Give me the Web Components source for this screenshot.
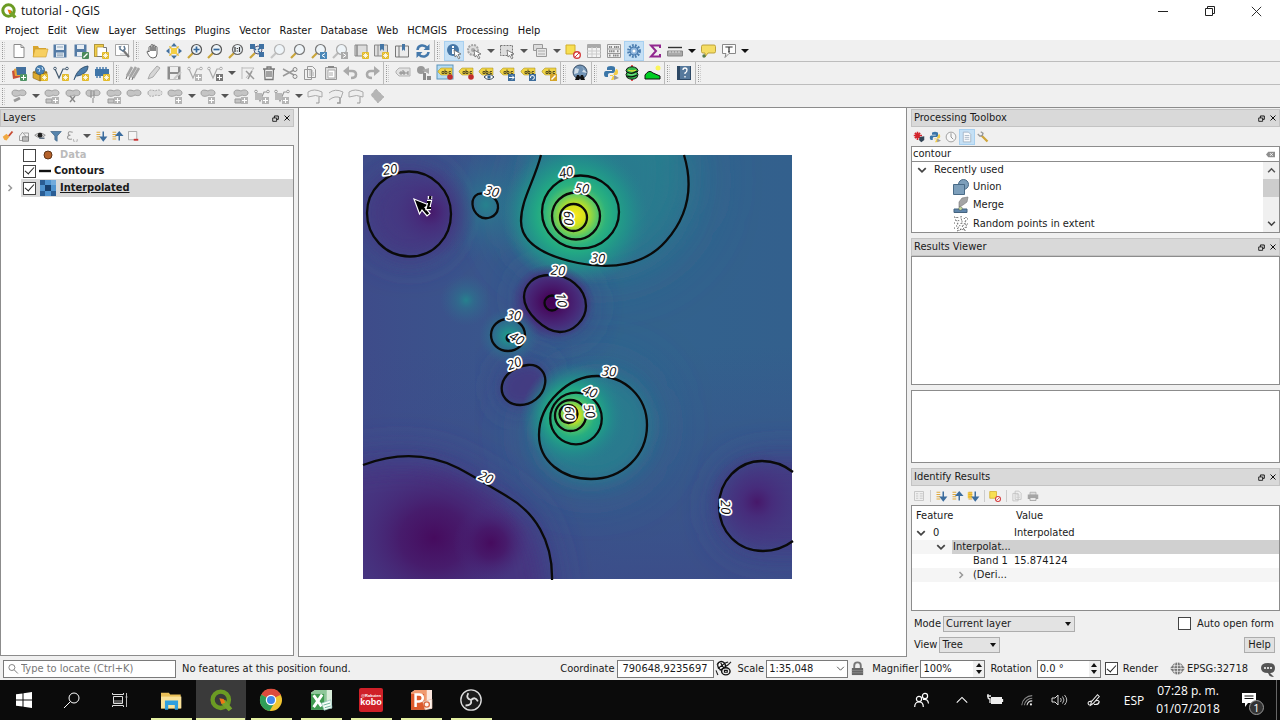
<!DOCTYPE html>
<html lang="en">
<head>
<meta charset="utf-8">
<title>tutorial - QGIS</title>
<style>
html,body{margin:0;height:100%}
body{font:11px/14px "DejaVu Sans Condensed","Noto Sans",sans-serif;color:#1a1a1a;background:#f0f0f0}
</style>
</head>
<body>
<qgis-app></qgis-app>
<script>
const define = (name, css, html, setup) => customElements.define(name, class extends HTMLElement {
  constructor() {
    super();
    const root = this.attachShadow({mode: 'open'});
    const t = document.createElement('template');
    t.innerHTML = `<style>*{box-sizing:border-box}button,input,select{font:inherit;color:inherit;margin:0}${css}</style>${typeof html === 'function' ? html(this) : html}`;
    root.append(t.content.cloneNode(true));
    if (setup) setup(root, this);
  }
});

/* ---------- icon library, 16x16 grid ---------- */
const badge = (c = '#e3bb2a') => `<rect x="9" y="9" width="7" height="7" rx="1" fill="${c}"/><path d="M12.500 10v5M10 12.500h5M10.700 10.700l3.600 3.600M14.300 10.700l-3.600 3.600" stroke="#fff" stroke-width=".8"/>`;
const tag = (c, extra = '') => `<path d="M1 6l3-3h11v7H4L1 7z" fill="${c}" stroke="#a08a20" stroke-width=".5"/><path d="M5 6.500h2v2H5zM8 4.500v4h2v-2H8M14 6.500h-2v2h2" fill="none" stroke="#4a4420" stroke-width=".9"/>${extra}`;
const lens = (c, handle, inner = '') => `<path d="M6 10l-5 5" stroke="${handle}" stroke-width="2.200"/><circle cx="9.500" cy="6.500" r="5" fill="#eef4f8" stroke="${c}" stroke-width="1.200"/>${inner}`;
const blob = '<path d="M1 5c0-4 5-3 7-2 3-2 7-1 7 2s-4 3-6 2c-3 2-8 2-8-2z" fill="#c4c4c4" stroke="#9a9a9a" stroke-width=".9"/>';
const gbadge = '<rect x="8" y="9" width="7" height="7" fill="#b5b5b5"/><path d="M11.500 10v5M9 12.500h5" stroke="#fff"/>';
const vline = c => `<path d="M2 4l4 9 4-9h3" fill="none" stroke="${c}" stroke-width="1.200"/><circle cx="2" cy="3.500" r="1.300" fill="#fff" stroke="${c}"/><circle cx="14" cy="3.500" r="1.300" fill="#fff" stroke="${c}"/>`;
const arrowTree = up => `<path d="M2 3h5M2 6h5M2 9h5M2 12h5" stroke="#e0a93b" stroke-width="1.500"/><path d="M11 ${up ? '14V6M7.500 7L11 3l3.500 4z' : '2v8M7.500 9.500L11 14l3.500-4.500z'}" stroke="#3d6d9e" stroke-width="2" fill="#3d6d9e"/>`;
const cursor = '<path d="M8 7l7 4-3 .6 2 3.400-1.500.8-1.700-3.300L9 14z" fill="#fff" stroke="#666" stroke-width=".8"/>';
const I = {
 qgis:'<circle cx="7.500" cy="7.500" r="5.700" fill="none" stroke="#6b9b23" stroke-width="3"/><path d="M8 8l2.500-.5L15.500 13.500 13 15.500 8 10.500z" fill="#74a32b"/><path d="M6.500 6.500l3 .5 1 2.500-2.500 1z" fill="#ee7913"/>',
 file:'<path d="M3 1.500h7l3 3v10H3z" fill="#fff" stroke="#8a8a8a"/><path d="M10 1.500v3h3" fill="none" stroke="#8a8a8a"/>',
 open:'<path d="M1 14V3h5l1 2h7v9z" fill="#d9a52e"/><path d="M1 14l2-8h13l-2 8z" fill="#f7cf60" stroke="#c99b30" stroke-width=".6"/>',
 save:'<path d="M1.500 1.500h13v13h-13z" fill="#547ba5"/><path d="M4 2h8v5H4z" fill="#e8eef4"/><path d="M4 9.500h8V14H4z" fill="#dde6ee"/><path d="M5 11h6M5 12.800h6M5 4h6" stroke="#7a92aa" stroke-width=".8"/>',
 saveas:'<path d="M1.500 1.500h12v12h-12z" fill="#547ba5"/><path d="M4 2h7v4H4zM4 9h7v4H4z" fill="#e8eef4"/><rect x="9" y="9" width="7" height="7" rx="1" fill="#4b8a5a"/><path d="M10.500 14.500l4-4" stroke="#fff" stroke-width="1.300"/>',
 layout:'<path d="M1.500 1.500h9v3h3v9h-12z" fill="#fff" stroke="#777"/><path d="M1.500 1.500h9v2.500H4v9.500H1.500z" fill="#f1ce4b" stroke="#b0902c" stroke-width=".7"/>'+badge(),
 layouts:'<path d="M1.500 1.500h13v11h-13z" fill="#fff" stroke="#a5a5a5"/><path d="M4 4l4-1M6 11h6" stroke="#ccc"/><path d="M9 7l6 7" stroke="#777" stroke-width="2.200"/><path d="M6 3v3l3 2 2-2-1-3" fill="none" stroke="#5f7890" stroke-width="1.500"/>',
 hand:'<path d="M4 9V4.500q0-1 1-1t1 1V8 2.500q0-1 1-1t1 1V8 3q0-1 1-1t1 1v5-3.500q0-1 1-1t1 1V11q0 4-4 4-3 0-4.500-3L2 9q0-1.500 2-.5z" fill="#fff" stroke="#555" stroke-width=".9"/>',
 panto:'<path d="M5 5h6v6H5z" fill="#f3cf45"/><path d="M8 0l3 3.500H5zM8 16l3-3.500H5zM0 8l3.500-3v6zM16 8l-3.500-3v6z" fill="#44719e"/><path d="M3 3l3 1-2 2zM13 3l-3 1 2 2zM3 13l1-3 2 2zM13 13l-3-1 2-2z" fill="#e5b92e"/>',
 zin:lens('#555','#c9a43a','<path d="M9.500 3.500v6M6.500 6.500h6" stroke="#34679b" stroke-width="1.700"/>'),
 zout:lens('#555','#c9a43a','<path d="M6.500 6.500h6" stroke="#34679b" stroke-width="1.700"/>'),
 znat:lens('#666','#c9a43a','<path d="M7 9V4M11.500 9V4M9.300 5v1M9.300 7.500v1" stroke="#333" stroke-width="1.200"/>'),
 zfull:'<path d="M6 10l-5 5" stroke="#c9a43a" stroke-width="2.200"/><circle cx="9" cy="7" r="4" fill="#dde8f0" stroke="#557"/><path d="M1 1h5v5H1zM10 1h5v5h-5zM10 9h5v5h-5z" fill="#3f71a3"/><path d="M5 5l2 2M11 5L9 7M11 9.500L9 8" stroke="#34679b" stroke-width="1.400"/>',
 zsel:lens('#b4b4b4','#c4c4c4'), zlay:lens('#777','#c9a43a'),
 zlast:lens('#777','#c9a43a','<path d="M9 9h7v7H9z" fill="#4b88b8"/><path d="M14 10.500l-3 2 3 2" fill="none" stroke="#fff"/>'),
 znext:lens('#a9a9a9','#bdbdbd','<path d="M9 9h7v7H9z" fill="#aaa"/><path d="M11 10.500l3 2-3 2" fill="none" stroke="#fff"/>'),
 newmap:'<path d="M2 2h2v11H2zM4 2h10v11H4z" fill="#ddd" stroke="#888"/>'+badge(),
 bmnew:'<path d="M1.500 2h13v11h-13zM5 2v11" fill="#ddd" stroke="#888"/><path d="M7 1h4v7L9 6 7 8z" fill="#4576a5"/>'+badge(),
 bm:'<path d="M1.500 3h13v11h-13zM5 3v11" fill="#ececec" stroke="#777"/><path d="M8 1h3v7L9.500 6.500 8 8z" fill="#4576a5"/>',
 refresh:'<path d="M2.500 7C3 2 9 1 12 4.500M13.500 9c-.5 5-6.500 6-9.500 2.500" fill="none" stroke="#4478ab" stroke-width="2.500"/><path d="M14.500 1v6h-6zM1.500 15V9h6z" fill="#4478ab"/>',
 identify:'<circle cx="7" cy="7" r="6" fill="#4577a8"/><path d="M7 3v2M7 6v5" stroke="#fff" stroke-width="2"/>'+cursor,
 action:'<circle cx="7" cy="7" r="5" fill="#ddd" stroke="#a5a5a5" stroke-width="2" stroke-dasharray="2 1"/><circle cx="7" cy="7" r="2" fill="#aaa"/>'+cursor,
 select:'<path d="M1.500 2.500h12v10h-12z" fill="#ddd" stroke="#777" stroke-dasharray="2 1"/>'+cursor,
 form:'<path d="M1.500 1.500h9v6h-9z" fill="#ddd" stroke="#999"/><path d="M4.500 5.500h10v8h-10z" fill="#e6e6e6" stroke="#999"/><path d="M6 8h7M6 11h7" stroke="#aaa"/>',
 desel:'<path d="M1 2h9v9H1z" fill="#f7df52" stroke="#d1ae2b"/><circle cx="12" cy="12" r="3.300" fill="#fff" stroke="#d33b3b" stroke-width="1.400"/><path d="M10 14l4-4" stroke="#d33b3b"/>',
 table:'<path d="M1.500 1.500h13v13h-13z" fill="#f4f4f4" stroke="#aaa"/><path d="M1 2h14v3H1z" fill="#aaa"/><path d="M6 4v10M10.500 4v10M1 8h14M1 11h14" stroke="#ccc"/>',
 abacus:'<path d="M1.500 1.500h13v13h-13zM1 6h14M1 10.500h14" fill="none" stroke="#999"/><path d="M3 4h3M8 4h5M3 8.300h6M11 8.300h2M3 12.500h2M7 12.500h6" stroke="#888" stroke-width="2" stroke-dasharray="1.300 .5"/>',
 gear:'<circle cx="8" cy="8" r="5.300" fill="none" stroke="#4b7db0" stroke-width="3.200" stroke-dasharray="1.700 1.100"/><circle cx="8" cy="8" r="4" fill="#8fb6dd" stroke="#4b7db0"/><circle cx="8" cy="8" r="1.500" fill="#fff"/>',
 sigma:'<path d="M13 5V2.500H4L9 8l-5 5.500h9V11" fill="none" stroke="#91278f" stroke-width="2"/>',
 ruler:'<path d="M1 4.500h14" stroke="#333" stroke-width="1.400"/><path d="M.5 8h15v5H.5z" fill="#aaa" stroke="#888"/><path d="M3 8v2M6 8v2M9 8v2M12 8v2" stroke="#ddd"/>',
 tip:'<path d="M3 2h11q1.500 0 1.500 1.500v5Q15.500 10 14 10H8l-3 4V10H3Q1.500 10 1.500 8.500v-5Q1.500 2 3 2z" fill="#f5dd65" stroke="#b79b30" stroke-width=".9"/><circle cx="4" cy="13" r="1.700" fill="#52794f"/>',
 textann:'<path d="M1.500 1.500h13v9H8l-4 4 1-4H1.500z" fill="#fbfbfb" stroke="#888"/><path d="M5 4.500V4h6v.5M8 4v5M7 9h2" fill="none" stroke="#333" stroke-width="1.200"/>',
 dsm:'<path d="M1 6l8-3 1 9-8 2z" fill="#c94f37"/><path d="M3 4l8-2v9H4z" fill="#e7a23b"/><path d="M5 2h10v8H6z" fill="#43719f"/><rect x="9" y="9" width="7" height="7" rx="1" fill="#4f9465"/><path d="M12.500 10v5M10 12.500h5" stroke="#fff"/>',
 box:'<path d="M1 7l7-3 7 3v6l-7 3-7-3z" fill="#dba92e" stroke="#8a6820" stroke-width=".6"/><path d="M1 7l7 3 7-3M8 10v6" stroke="#8a6820" fill="none"/><circle cx="8" cy="5" r="4.500" fill="#4a82b5" stroke="#325b80" stroke-width=".7"/><path d="M5 3l3 1-1 3M10 2l1 3" stroke="#cfe2f1" fill="none"/>'+badge(),
 shp:vline('#43596e')+badge(), spat:'<path d="M1 15C3 8 7 2 15 1c0 6-5 9-11 10" fill="#4d7eaa" stroke="#34526f"/>'+badge(),
 mem:'<path d="M1 4h14v7H1z" fill="#3f75a8"/><path d="M3 2v2M6 2v2M9 2v2M12 2v2M3 11v2M6 11v2" stroke="#3f75a8" stroke-width="1.400"/>'+badge(),
 edits:'<path d="M2 11L7 2M5 12l6-10M8 13l6-10" stroke="#a5a5a5" stroke-width="2.600"/><path d="M1 14l1-3M4 15l1-3M7 15l1-3" stroke="#777"/>',
 pencil:'<path d="M2 14l2-5 7-8 3 2-7 9z" fill="#d6d6d6" stroke="#aaa"/>',
 gsave:'<path d="M1.500 1.500h13v13h-13z" fill="#8d8d8d"/><path d="M4 2h8v5H4zM4 9h8v5H4z" fill="#eee"/><path d="M8 14l7-7" stroke="#c8c8c8" stroke-width="2"/>',
 addf:vline('#aaa')+gbadge, addf2:vline('#aaa')+'<path d="M9 9h7v7H9z" fill="#777"/><path d="M12.500 10v5M10 12.500h5" stroke="#fff"/>',
 node:'<path d="M2 2v12M2 3h12L6 13" stroke="#bbb" fill="none"/><path d="M6 6l8 8M12 6l-4 8" stroke="#999" stroke-width="1.500"/>',
 trash:'<path d="M2 4h12M6 4V2h4v2M3.500 4l.5 10.500h8l.5-10.500M6 6v6M8 6v6M10 6v6" fill="none" stroke="#777" stroke-width="1.300"/>',
 cut:'<path d="M1 4l11 6M1 11l11-6" stroke="#999" stroke-width="1.500"/><circle cx="13" cy="11.500" r="2" fill="none" stroke="#888"/><circle cx="13" cy="4.500" r="2" fill="none" stroke="#888"/>',
 copy:'<path d="M2.500 4.500h7v10h-7zM5.500 1.500h5l3 3v8h-8z" fill="#f1f1f1" stroke="#999"/><path d="M7 6h4M7 8h5M7 10h5" stroke="#aaa"/>',
 paste:'<path d="M2.500 2.500h11v12h-11z" fill="#ddd" stroke="#999"/><path d="M5 5h7v8H5z" fill="#fff" stroke="#aaa"/><path d="M5 1h6v2H5z" fill="#888"/><path d="M6 8h4M6 10h4" stroke="#aaa"/>',
 undo:'<path d="M2 6h7q4 0 4 3.500T8 13" fill="none" stroke="#aaa" stroke-width="2.600"/><path d="M6 1v10L0 6z" fill="#aaa"/>',
 redo:'<path d="M14 6H7q-4 0-4 3.500T8 13" fill="none" stroke="#aaa" stroke-width="2.600"/><path d="M10 1v10l6-5z" fill="#aaa"/>',
 lab0:'<path d="M1 6l3-3h11v8H4L1 8z" fill="#e2e2e2" stroke="#b2b2b2"/><path d="M5 7h2v2H5zM8 5v4h2V7H8M14 7h-2v2h2" fill="none" stroke="#8a8a8a"/>',
 diag:'<circle cx="5" cy="5" r="4" fill="#999"/><path d="M6 5l7-2v6z" fill="#aaa"/><path d="M7 8h3v7H7zM11 11h4v4h-4z" fill="#8a8a8a"/>',
 lab1:'<rect width="16" height="14" fill="#b6dcf3" stroke="#5c94ba"/>'+tag('#f0d445','<circle cx="13" cy="12" r="2.800" fill="#c22d2d"/>'),
 lab2:tag('#f0d445','<circle cx="13" cy="12" r="2.800" fill="#c22d2d"/>'),
 lab3:tag('#f0d445','<path d="M6 12q5-5 10 0-5 5-10 0z" fill="#fff" stroke="#345"/><circle cx="11" cy="12" r="1.700" fill="#369"/>'),
 lab4:tag('#f0d445','<path d="M9 9h7v7H9z" fill="#3f6e9d"/><path d="M10 12.500h5M13 10.500l2 2-2 2" stroke="#fff" fill="none"/>'),
 lab5:tag('#f0d445','<path d="M9 9h7v7H9z" fill="#3f6e9d"/><path d="M10.500 13a2 2 0 1 1 2 1.500" stroke="#fff" fill="none"/>'),
 lab6:tag('#f0d445','<path d="M9 9h7v7H9z" fill="#d4a52a"/><path d="M10.500 14.500l4-4" stroke="#fff" stroke-width="1.500"/>'),
 globe:'<circle cx="8" cy="7" r="7" fill="#7193b5" stroke="#3b5068"/><path d="M3 3l4 1-1 4-4 1M9 1l3 3-2 3 5 1" fill="#cfdce8"/><path d="M3 15l2-5h2l1 2 1-2h2l2 5h-4l-1-2-1 2z" fill="#111"/>',
 py:'<path d="M8 1q-4 0-4 2v2h5v1H3Q1 6 1 9t2 3h2V9.500Q5 8 7 8h3q2 0 2-2V3q0-2-4-2z" fill="#3b76a8"/><path d="M8 15q4 0 4-2v-2H7v-1h6q2 0 2-3t-2-3" fill="#f3cd46"/><path d="M11 10l5 3-5 2z" fill="#999"/>',
 grass:'<path d="M8 0v16" stroke="#d22" stroke-width="1.500"/><path d="M3 3.500q5-3.500 10 0l1 2-1 2 1 2-1 3q-5 3.500-10 0l-1-3 1-2-1-2z" fill="#2fbd4a" stroke="#111"/><path d="M3 7q5 3 10-1M3 11q5 2 10-1" stroke="#111" stroke-width="1.200" fill="none"/><path d="M4 5q4 2 8 0" stroke="#f4dd2f" stroke-width="1.300" fill="none"/><path d="M4 9.300q4 1.500 8-.5" stroke="#7fe08c" fill="none"/>',
 hill:'<path d="M0 14V10q4-6 8-2l7 3v3z" fill="#00ce22" stroke="#111"/><circle cx="13" cy="3" r="2.500" fill="#fbf55b"/>',
 help:'<path d="M1 1h14v14H1z" fill="#2d4966"/><path d="M4 1h10v13H4z" fill="#56799c"/><path d="M7 5q0-2 2-2t2 2-2 3v1M9 11v1.500" fill="none" stroke="#fff" stroke-width="1.300"/>',
 d1:blob+'<path d="M3 13l6-3" stroke="#999" stroke-width="3"/>',
 d2:blob+'<path d="M2 11h6v4H2z" fill="#c4c4c4" stroke="#999"/>'+gbadge,
 d3:blob+'<path d="M5 8l5 6M10 8l-5 6" stroke="#888" stroke-width="1.400"/>',
 d4:blob+'<path d="M6 3v7M9 3v7M8 10v5" stroke="#888"/>',
 d5:blob, d6:'<path d="M1 5c0-4 5-3 7-2 3-2 7-1 7 2s-4 3-6 2c-3 2-8 2-8-2z" fill="#ddd" stroke="#aaa" stroke-dasharray="2 1"/>',
 d7:blob+gbadge, d8:vline('#999')+gbadge+'<path d="M1 5h7v7H1z" fill="#bbb"/>',
 d9:'<path d="M1 4q6-4 14 0v5q-6-3-14 0z" fill="#eee" stroke="#aaa"/><path d="M12 9v6H9" stroke="#999" fill="none"/>',
 d10:'<path d="M1 5q6-5 14-1l-2 6q-6-3-12 2" fill="#eee" stroke="#aaa"/><path d="M12 10v5H9" stroke="#999" fill="none" stroke-width="1.500"/>',
 d11:'<path d="M7 1l8 8-6 6-7-8z" fill="#b5b5b5" stroke="#aaa" stroke-dasharray="1 1"/>',
 brush:'<path d="M1 9l5-4 4 4-4 5-3-1z" fill="#f0a943"/><path d="M9 8l5-6" stroke="#c84b32" stroke-width="2.500"/>',
 group:'<path d="M2 8l4-5 4 5v6H2zM8 4h6v10" fill="none" stroke="#888"/><path d="M6 9h8v6H6z" fill="#bbb" stroke="#777"/>',
 eye:'<path d="M1 7q7-6 14 0-7 6-14 0z" fill="#ddd" stroke="#777"/><circle cx="8" cy="7" r="3.200" fill="#222"/><path d="M7 11h7" stroke="#678" stroke-width="2"/>',
 filter:'<path d="M1 2h14l-5.500 6v7l-3-2V8z" fill="#5584ad" stroke="#41678a"/>',
 eps:'<path d="M9 3Q3 1 3 4.500 3 7 6 7 2 7 2 10t6 2" fill="none" stroke="#999" stroke-width="1.400"/><path d="M10 12v3h2M15 12v3h-2" stroke="#aaa" fill="none"/>',
 exp:arrowTree(false), col:arrowTree(true), expn:'<path d="M1 3h6v8H1z" fill="#f5cc3e"/>'+arrowTree(false),
 rem:'<path d="M2 2h11v11H2z" fill="#f5f5f5" stroke="#999"/><path d="M9 13h6" stroke="#c33" stroke-width="2.500"/>',
 cog:'<path d="M6 1v11M1 6h11M2.500 2.500l7 7M9.500 2.500l-7 7" stroke="#d3242c" stroke-width="2.200"/><path d="M9 8l6-1v5l-4 3-3-3z" fill="#345"/>',
 clock:'<circle cx="8" cy="8" r="6.500" fill="#f7f7f7" stroke="#999" stroke-width="1.200"/><path d="M8 3v5l3 3" fill="none" stroke="#888" stroke-width="1.200"/>',
 doc:'<path d="M3 1.500h7l3 3v10H3z" fill="#f8fafc" stroke="#9ab"/><path d="M5 6h6M5 8.500h6M5 11h6" stroke="#9ab"/>',
 wrench:'<path d="M6 6l8 8" stroke="#cfa53a" stroke-width="3"/><path d="M1 4l3 3 3-1 1-3-3-2" fill="none" stroke="#999" stroke-width="1.800"/>',
 union:'<circle cx="10.500" cy="5.500" r="5" fill="#7d9fbb" stroke="#496b87"/><path d="M.5 5.500h11v10H.5z" fill="#7d9fbb" stroke="#496b87"/>',
 merge:'<path d="M1 12h13v3.500H1z" fill="#5f86ab" stroke="#45637f"/><path d="M6 10V5l3-4 6-1-1 5-4 3z" fill="#a5a5a5" stroke="#777" stroke-width=".6"/><circle cx="7.500" cy="11.500" r="1.800" fill="#c5dc9a" stroke="#555" stroke-width=".5"/>',
 rnd:'<path d="M1 1l14 2M2 4l12 2M1 7l14 1M3 10l12-1M1 12l13 2M4 15l10-4M8 0l2 15M3 1l3 14M13 1l-1 14" stroke="#555" stroke-dasharray="1 2.300" stroke-width="1"/>',
 lst:'<path d="M2 2h12v12H2z" fill="none" stroke="#bbb"/><path d="M4 5h3M4 8h3M4 11h3M9 5h4M9 8h4M9 11h4" stroke="#bbb"/>',
 gcopy:'<path d="M2.500 4.500h7v10h-7zM5.500 1.500h5l3 3v8h-8z" fill="#f1f1f1" stroke="#bbb"/><path d="M7 6h4M7 8h5M7 10h5" stroke="#ccc"/>',
 print:'<path d="M4 3h8v4H4z" fill="#ddd" stroke="#aaa"/><path d="M1 6h14v6H1z" fill="#a5a5a5"/><path d="M4 10h8v4H4z" fill="#e8e8e8" stroke="#999"/>',
 ras:'<path d="M0 0h16v16H0z" fill="#2a5d94"/><path d="M0 5h5v6H0zM5 0h6v5H5zM11 5h5v6h-5zM5 11h6v5H5z" fill="#4f93cf"/><path d="M5 5h6v6H5z" fill="#173f6d"/><path d="M11 0h5v5h-5z" fill="#72aadb"/>',
 dot:'<circle cx="8" cy="8" r="4" fill="#b5622b" stroke="#5f3418"/>',
 line:'<path d="M2 8h12" stroke="#111" stroke-width="2.400"/>',
 bug:'<path d="M2 15L0 10M3 1l-2 3M13 4l3-3M10 2l3-1" stroke="#222" stroke-width="1.200"/><ellipse cx="6" cy="5" rx="4" ry="4.500" fill="#fff" stroke="#111" stroke-width="1.500" transform="rotate(-25 6 5)"/><ellipse cx="10.500" cy="11" rx="4.500" ry="3.800" fill="#eee" stroke="#111" stroke-width="1.500"/><path d="M2 8l8-6M4 10l9-6M5 2l3 5M9 10h3v2H9z" stroke="#111" stroke-width="1.200"/>',
 lock:'<path d="M4.500 8V5q0-3.500 3.500-3.500T11.500 5v3" fill="none" stroke="#777" stroke-width="2"/><path d="M2 7.500h12V15H2z" fill="#666"/><path d="M2 10h12M2 12.500h12" stroke="#888"/>',
 crs:'<path d="M4 3q4-3 8 0l4 5-4 5q-4 3-8 0L0 8z" fill="#777"/><path d="M0 8h16M3 5h10M3 11h10M8 1v14M5.500 2q-3 6 0 12M10.500 2q3 6 0 12" stroke="#eee" stroke-width=".8" fill="none"/>',
 chat:'<path d="M1 7q0-5 7-5t7 5-5 5l4 4q-5 0-6-4-7 0-7-5z" fill="#555"/><path d="M4 7h2M7 7h2M10 7h2" stroke="#fff" stroke-width="1.700"/>',
 mag:'<circle cx="6.500" cy="6" r="4" fill="none" stroke="#777" stroke-width="1.200"/><path d="M9.500 9l5 5" stroke="#777" stroke-width="1.300"/>',
 clear:'<path d="M0 8l4-5h12v10H4z" fill="#8e8e8e"/><path d="M7 5.500l5 5M12 5.500l-5 5" stroke="#fff" stroke-width="1.500"/>',
 float:'<path d="M6 3.500h7v6H6z" fill="none" stroke="#111" stroke-width="1.700"/><path d="M3 7h7v6H3z" fill="#d9d9d9" stroke="#111" stroke-width="1.500"/>',
 x:'<path d="M3 3l10 10M13 3L3 13" stroke="#111" stroke-width="2"/>',
 cr:'<path d="M5 2l6 6-6 6" fill="none" stroke="#999" stroke-width="3"/>',
 cd:'<path d="M2 5l6 6 6-6" fill="none" stroke="#444" stroke-width="2.800"/>',
 cdt:'<path d="M2 5l6 6 6-6" fill="none" stroke="#555" stroke-width="1.700"/>',
 cu:'<path d="M2 11l6-6 6 6" fill="none" stroke="#555" stroke-width="2.800"/>',
 wmin:'<path d="M3 8.500h10" stroke="#222"/>', wmax:'<path d="M3.500 5.500h7v7h-7zM5.500 5.500v-2h7v7h-2" fill="none" stroke="#222"/>', wx:'<path d="M3 3l10 10M13 3L3 13" stroke="#222"/>',
 win:'<path d="M0 2.300l6.500-.9v6.100H0zM7.500 1.200L16 0v7.500H7.500zM0 8.500h6.500v6.100L0 13.700zM7.500 8.500H16V16l-8.500-1.200z" fill="#fff"/>',
 tsearch:'<circle cx="10" cy="6" r="5" fill="none" stroke="#fff"/><path d="M6.500 9.500L0 16" stroke="#fff"/>',
 tview:'<path d="M1.500 4.500h9v7h-9zM.5 1v1.500h11V1M.5 15v-1.500h11V15" fill="none" stroke="#ddd"/><path d="M2 8h8v3H2z" fill="#555"/><path d="M14.500 1v14M13.500 5h2" stroke="#bbb"/>',
 folder:'<path d="M0 2h6l1 1.500h8V14H0z" fill="#e9bf58"/><path d="M0 5h15.500v9H0z" fill="#fae29a"/><path d="M3 8h10v7h-2.500v-3.500h-5V15H3z" fill="#2f9fdf"/>',
 chrome:'<circle cx="8" cy="8" r="8" fill="#f1c531"/><path d="M8 8L1 4a8 8 0 0 1 14 0z" fill="#dd4b3e"/><path d="M8 8L1 4a8 8 0 0 0 6 12l4-7z" fill="#2f9e57"/><path d="M8 4h7" stroke="#dd4b3e" stroke-width="1"/><circle cx="8" cy="8" r="3.800" fill="#fff"/><circle cx="8" cy="8" r="2.900" fill="#4287ec"/>',
 excel:'<path d="M0 2l3-2h13v14H0z" fill="#d9ecd9"/><path d="M0 2l3-2h9v15H0z" fill="#8fc79a"/><path d="M0 3h10v12H0z" fill="#3f9a50"/><path d="M2 4l6 8.500M8.500 3.500l-6.500 9.500" stroke="#fff" stroke-width="2.200"/><path d="M8 10l7-2.500 1 6-6 2z" fill="#f5fff5" stroke="#8bb" stroke-width=".5"/><path d="M9.500 11.500l5-1.500M10.500 13.500l4.500-1.300" stroke="#6a9" stroke-width=".7"/>',
 ppt:'<path d="M0 2l3-2h13v14H0z" fill="#fbe5dc"/><path d="M0 2l3-2h9v15H0z" fill="#f09a70"/><path d="M0 3h10v12H0z" fill="#dd5a2c"/><path d="M3.500 13V3.500h2.800q2.700 0 2.700 2.600T6.300 8.700H4" fill="none" stroke="#fff" stroke-width="1.900"/><path d="M9 9l7-2v7l-5 1z" fill="#fff5ee" stroke="#dba" stroke-width=".5"/><circle cx="12" cy="11" r="2" fill="none" stroke="#d96940"/>',
 obs:'<circle cx="8" cy="8" r="7.400" fill="#1c1c1c" stroke="#ddd" stroke-width="1"/><path d="M8 8q-4-1-2-5M8 8q3-3 5 1M8 8q1 4-4 4" fill="none" stroke="#ddd" stroke-width="1.300"/>',
 people:'<circle cx="5" cy="7" r="2.600" fill="none" stroke="#fff" stroke-width="1.200"/><path d="M.7 15q0-5 4.300-5t4.300 5M9 7.500q5-1 5.500 4" fill="none" stroke="#fff" stroke-width="1.200"/><circle cx="11" cy="4" r="2.600" fill="none" stroke="#fff" stroke-width="1.200"/>',
 tup:'<path d="M2 11l6-6 6 6" fill="none" stroke="#fff" stroke-width="1.200"/>',
 bat:'<path d="M4 5h11v7H4z" fill="#eee"/><path d="M15.500 7v3M0 4h4M1 2v3q0 2 2 2v4" stroke="#eee" fill="none" stroke-width="1.300"/>',
 wifi:'<g fill="none" stroke="#888" stroke-width="1.200"><path d="M2 14A12 12 0 0 1 14 3"/><path d="M5 14A9 9 0 0 1 14 6"/><path d="M8 14a6 6 0 0 1 6-5" stroke="#ddd"/></g><circle cx="12.500" cy="13" r="1.200" fill="#eee"/>',
 vol:'<path d="M1 6h3l3-3v10L4 10H1z" fill="none" stroke="#ddd"/><path d="M9.500 6q1.500 2 0 4M11.500 4.500q3 3.500 0 7M13.500 3q4.500 5 0 10" fill="none" stroke="#bbb"/>',
 pen:'<path d="M4 14l1-4 7-8 2 2-7 8zM6 9l-4 1q-2 2 1 4M8 13q5 1 6-3-1-2-4-1" fill="none" stroke="#eee" stroke-width="1.200"/>',
 note:'<path d="M1 1h14v10H7l-3 4v-4H1z" fill="#fff"/><path d="M3.500 4h9M3.500 6.500h9" stroke="#111"/>'
};
const ic = (n, s = 16) => `<ui-icon name="${n}" style="--s:${s}px"></ui-icon>`;
define('ui-icon', ':host{display:inline-flex;flex:none;width:var(--s,16px);height:var(--s,16px)}svg{width:100%;height:100%;overflow:visible}',
  h => `<svg viewBox="0 0 16 16" fill="none" aria-hidden="true">${I[h.getAttribute('name')]}</svg>`);

/* ---------- toolbars ---------- */
/* ">" is a drop-down arrow, ">k" a black one, "!" marks a pressed button */
define('tool-group', `
:host{display:flex;align-items:center;height:100%;flex:none}
.grip{width:3px;height:17px;margin:0 4px 0 1px;border-left:1px dotted #999;border-right:1px dotted #ccc}
.items{display:flex;justify-content:space-between;align-items:center;width:var(--w);height:100%}
button{border:0;background:none;padding:0;width:20px;height:20px;display:flex;align-items:center;justify-content:center}
button.on{background:#c5e0f5;box-shadow:inset 0 0 0 1px #a8d0f0}
button.dd{width:12px}
.dd i{border:4px solid transparent;border-top:4px solid #555;border-bottom:0}
.dd.k i{border-top-color:#111}
:host([line]) .items{margin-right:1px}
:host([line])::after{content:"";height:100%;border-left:1px solid #bbb;margin-right:1px}`,
h => `<span class="grip"></span>${h.hasAttribute('items') ? `<div class="items" role="group">${h.getAttribute('items').split(' ').map(n =>
  n === '>' || n === '>k' ? `<button class="dd ${n[1] || ''}" aria-label="More options"><i></i></button>`
  : `<button class="${n[0] === '!' ? 'on' : ''}" aria-label="${n.replace('!', '')}">${ic(n.replace('!', ''))}</button>`).join('')}</div>` : ''}`);
const tg = (w, line, items) => `<tool-group ${line ? 'line' : ''} style="--w:${w}px" items="${items}"></tool-group>`;

define('tool-bars', `
:host{display:block;background:#f0f0f0;border-bottom:1px solid #8c8c8c}
.row{display:flex;align-items:center;height:21px;padding-left:1px}
.row+.row{border-top:1px solid #bdbdbd;height:23px}`,
`<div class="row" role="toolbar">${tg(123, 1, 'file open save saveas layout layouts')}${tg(290, 1, 'hand panto zin zout znat zfull zsel zlay zlast znext newmap bmnew bm refresh')}${tg(307, 0, '!identify action > select > form > desel table abacus !gear sigma ruler >k tip textann >k')}</div>
<div class="row" role="toolbar">${tg(103, 1, 'dsm box shp spat mem')}${tg(259, 1, 'edits pencil gsave addf addf2 > node trash cut copy paste undo redo')}${tg(166, 1, 'lab0 diag lab1 lab2 lab3 lab4 lab5 lab6')}${tg(20, 1, 'globe')}${tg(62, 1, 'py grass hill')}${tg(20, 1, 'help')}<tool-group></tool-group></div>
<div class="row" role="toolbar">${tg(378, 0, 'd1 > d2 d3 d4 d2 d5 d6 d7 > d7 > d2 d8 d8 > d9 d10 d9 d11')}</div>`);

/* ---------- title + menu ---------- */
define('title-bar', `
:host{display:flex;align-items:center;height:22px;background:#fff;padding-left:1px;font:12px/16px "Open Sans",sans-serif;color:#111}
span{flex:1;padding-left:4px}
button{border:0;background:none;width:47px;height:22px;padding:0;display:grid;place-items:center}`,
`${ic('qgis')}<span>tutorial - QGIS</span><button aria-label="Minimize">${ic('wmin')}</button><button aria-label="Restore">${ic('wmax')}</button><button aria-label="Close">${ic('wx', 15)}</button>`);
define('menu-bar', `
:host{display:block;background:#fff;height:18px;font-size:11px}
nav{display:flex;align-items:center;height:18px;padding-left:5px;gap:9px}
button{border:0;background:none;padding:0;line-height:18px;color:#111}`,
`<nav>${'Project Edit View Layer Settings Plugins Vector Raster Database Web HCMGIS Processing Help'.split(' ').map(m => `<button>${m}</button>`).join('')}</nav>`);

/* ---------- dock panel ---------- */
define('dock-panel', `
:host{display:flex;flex-direction:column;min-height:0}
header{display:flex;align-items:center;height:18px;flex:none;background:#d9d9d9;border:1px solid #c3c3c3;padding:0 0 0 2px}
h2{font:inherit;margin:0;flex:1}
button{border:0;background:none;padding:0;width:12px;height:16px;display:grid;place-items:center}
::slotted(*){flex:none}::slotted(.fill){flex:1 1 auto}`,
h => `<header><h2>${h.getAttribute('heading')}</h2><button aria-label="Float">${ic('float', 9)}</button><button aria-label="Close">${ic('x', 8)}</button></header><slot></slot>`);

const small = 'button.t{border:0;background:none;padding:0;width:16px;height:16px;display:grid;place-items:center}button.dd{width:13px}button.t.on{background:#c5e0f5;box-shadow:inset 0 0 0 1px #a8d0f0}.dd i{border:4px solid transparent;border-top-color:#555;border-bottom:0}.sep{width:1px;height:12px;background:#ccc;margin:0 2px 0 3px}';
const st = n => `<button class="t${n[0] === '!' ? ' on' : ''}" aria-label="${n.replace('!', '')}">${ic(n.replace('!', ''), 12)}</button>`;
const check = 'input[type=checkbox]{appearance:none;flex:none;width:13px;height:13px;border:1px solid #444;background:#fff;display:grid;place-items:center}input[type=checkbox]:checked::before{content:"";width:4px;height:8px;border:solid #222;border-width:0 1px 1px 0;transform:rotate(42deg);margin-top:-3px}';

define('layer-tree', `${small}${check}
:host{display:flex;flex-direction:column}
.bar{display:flex;align-items:center;height:18px;flex:none}
ul{flex:1;margin:0;padding:1px 0 0;list-style:none;background:#fff;border:1px solid #8c8c8c}
li{display:flex;align-items:center;height:16px;padding-left:5px}
li>ui-icon:first-child,.no{width:8px;flex:none}
label{display:flex;align-items:center;gap:3px;padding-left:9px;font-weight:bold}
.off{color:#bbb}.sel{background:linear-gradient(90deg,#fff 20px,#d9d9d9 20px);height:18px}.sel b{text-decoration:underline}
.no+label{gap:1px}.w label{gap:4px}`,
`<div class="bar">${['brush', 'group', 'eye', 'filter', 'eps'].map(st).join('')}<button class="t dd" aria-label="Expression filter"><i></i></button>${['exp', 'col', 'rem'].map(st).join('')}</div>
<ul><li class="w off"><span class="no"></span><label><input type="checkbox">${ic('dot')}<b>Data</b></label></li>
<li><span class="no"></span><label><input type="checkbox" checked>${ic('line')}<b>Contours</b></label></li>
<li class="sel w">${ic('cr', 8)}<label><input type="checkbox" checked>${ic('ras')}<b>Interpolated</b></label></li></ul>`);

define('tool-box', `${small}
:host{display:flex;flex-direction:column}
.bar{display:flex;align-items:center;height:19px}
.search{display:flex;align-items:center;height:16px;background:#fff;border:1px solid #8c8c8c;padding-right:4px}
.search input{flex:1;min-width:0;border:0;outline:0;padding:0 1px;background:none;height:14px}
.search button{border:0;background:none;padding:0;display:flex}
.tree{display:flex;height:71px;background:#fff;border:1px solid #8c8c8c;border-top:0;overflow:hidden}
ul{flex:1;margin:0;padding:0;list-style:none}
li{display:flex;align-items:center;gap:4px;height:18px;padding-left:41px}
li.top{height:15px;padding-left:5px;gap:7px}li.u{height:19px}
.sb{width:16px;background:#f0f0f0;display:flex;flex-direction:column;align-items:center}
.sb i{width:16px;height:18px;background:#cdcdcd;margin:0 0 auto}.sb ui-icon{margin:4px 0}`,
`<div class="bar">${['cog', 'py', 'clock', '!doc', 'wrench'].map(st).join('')}</div>
<div class="search"><input type="text" value="contour" aria-label="Search"><button aria-label="Clear">${ic('clear', 9)}</button></div>
<div class="tree"><ul><li class="top">${ic('cd', 10)}Recently used</li><li class="u">${ic('union')}Union</li><li>${ic('merge')}Merge</li><li class="u">${ic('rnd')}Random points in extent</li></ul>
<div class="sb">${ic('cu', 9)}<i></i>${ic('cd', 9)}</div></div>`);

define('results-view', `
:host{display:flex;flex-direction:column;gap:5px}
div{background:#fff;border:1px solid #8c8c8c;flex:128 1 0}div+div{flex-grow:71}`, '<div></div><div></div>');

define('identify-view', `${small}${check}
:host{display:flex;flex-direction:column;padding-bottom:4px}
.bar{display:flex;align-items:center;height:19px}
.grid{height:106px;background:#fff;border:1px solid #8c8c8c}
table{width:100%;border-collapse:collapse;table-layout:fixed}
th,td{font-weight:normal;text-align:left;padding:0;height:14px;line-height:14px;white-space:nowrap}
th{height:20px;padding-left:4px}th:first-child{width:100px}
td{padding-left:2px}
td:first-child{padding-left:1px}
td div{display:flex;align-items:center}
.l1{padding-left:3px;gap:7px}.l2{padding-left:23px;gap:7px}.l3{padding-left:60px}.l3c{padding-left:44px;gap:8px}
.sel{background:linear-gradient(90deg,#f5f5f5 40px,#d0d0d0 40px)}.alt{background:#f5f5f5}
.f{display:flex;align-items:center;height:17px;padding:0 5px 0 3px;margin-top:4px}
label{display:flex;align-items:center}
select{appearance:none;height:16px;border:1px solid #adadad;background:#e3e3e3;padding:0 2px;border-radius:0;line-height:14px}
.s{position:relative;margin-left:2px;display:flex}.s::after{content:"";position:absolute;right:4px;top:6px;border:3px solid transparent;border-top:4px solid #111;border-bottom:0}
.sp{flex:1}.c{gap:6px;padding-right:1px}
.help{height:16px;width:31px;padding:0;border:1px solid #adadad;background:#e1e1e1;line-height:13px}`,
`<div class="bar">${st('lst')}<span class="sep"></span>${['exp', 'col', 'expn'].map(st).join('')}<span class="sep"></span>${st('desel')}<span class="sep"></span>${['gcopy', 'print'].map(st).join('')}</div>
<div class="grid"><table><thead><tr><th>Feature</th><th>Value</th></tr></thead><tbody>
<tr><td><div class="l1">${ic('cd', 10)}<span>0</span></div></td><td>Interpolated</td></tr>
<tr class="sel"><td><div class="l2">${ic('cd', 10)}Interpolat...</div></td><td></td></tr>
<tr><td><div class="l3">Band 1</div></td><td>15.874124</td></tr>
<tr class="alt"><td><div class="l3c">${ic('cr', 8)}<span>(Deri...</span></div></td><td></td></tr></tbody></table></div>
<div class="f"><label>Mode<span class="s"><select style="width:132px"><option>Current layer</option></select></span></label><span class="sp"></span><label class="c"><input type="checkbox">Auto open form</label></div>
<div class="f"><label>View<span class="s"><select style="width:61px"><option>Tree</option></select></span></label><span class="sp"></span><button class="help">Help</button></div>`);

/* ---------- map ---------- */
const shape = {
  nw: 'M409 171.500C432 171.500 451 190 451 214C451 238 433 256.500 410 256.500C385 256.500 367 236 367 213C367 190 386 171.500 409 171.500z',
  small: 'M478 194C488 191 499 199 498 208 497 217 486 221 479 216 471 210 470 198 478 194z',
  north: 'M541 155C534 182 521 200 521 221C521 243 545 256 578 263C612 270 645 265 666 241C688 216 694 188 684 155',
  pit: 'M549 275C568 274 586 288 586 306C586 320 573 332 560 332C545 332 524 312 524 297C524 285 534 275 549 275z',
  mid: 'M528 365C539 364 547 373 545 384C543 397 531 405 520 405C508 405 500 396 502 385C504 374 516 366 528 365z',
  south: 'M597 376C625 376 647 397 647 425C647 456 622 479 591 479C562 479 539 461 539 435C539 402 570 376 597 376z',
  sw: 'M363 465C395 453 428 453 458 468C475 477 493 488 508 497C534 512 553 540 552 580',
  se: 'M793 472C784 465 773 461 762 461C738 461 719 481 719 506C719 532 738 551 763 551C775 551 785 547 793 541'
};
const glow = (id, stops) => `<radialGradient id="${id}">${stops.map(([o, c, a = 1]) => `<stop offset="${o}" stop-color="${c}" stop-opacity="${a}"/>`).join('')}</radialGradient>`;
const spot = (x, y, rx, ry, id) => `<ellipse cx="${x}" cy="${y}" rx="${rx}" ry="${ry}" fill="url(#${id})"/>`;
const haze = (d, fill, b, o = 1) => `<path d="${d}" fill="${fill}" opacity="${o}" filter="url(#b${b})"/>`;
const labels = [[390,169,-8,20],[492,191,14,30],[566,172,-12,40],[582,188,6,50],[569,218,88,60],[598,258,3,30],[558,270,4,20],[562,300,82,10],[514,315,6,30],[517,338,30,40],[514,363,-20,20],[609,371,4,30],[590,391,22,40],[590,411,78,50],[570,413,86,60],[486,477,24,20],[726,507,88,20]];
define('map-canvas', `
:host{display:block;background:#fff;border:solid #8c8c8c;border-width:0 1px 1px;min-width:0;min-height:0;position:relative}
svg{position:absolute;inset:0;width:100%;height:100%}
text{font:italic 13px "Open Sans",sans-serif;text-anchor:middle;fill:#111;stroke:#fff;stroke-width:3.500px;stroke-linejoin:round;paint-order:stroke}`,
`<svg viewBox="299 108 607 548" role="img" aria-label="Interpolated raster with contours">
<defs>
<linearGradient id="base"><stop offset="0" stop-color="#3e4c8a"/><stop offset=".3" stop-color="#39568c"/><stop offset=".6" stop-color="#32628d"/><stop offset="1" stop-color="#33608d"/></linearGradient>
<linearGradient id="low" x2="0" y2="1"><stop offset=".45" stop-color="#3d4a89" stop-opacity="0"/><stop offset="1" stop-color="#3e4989" stop-opacity=".8"/></linearGradient>
${glow('peak', [[0,'#f9e721'],[.13,'#d5e21a'],[.2,'#a0da39'],[.31,'#54c568'],[.42,'#2db27d'],[.52,'#22a884'],[.75,'#1f998a',.6],[1,'#25858e',0]])}
${glow('peak2', [[0,'#fbe723'],[.1,'#e2e418'],[.18,'#a0da39'],[.3,'#4ac16d'],[.42,'#28ae80'],[.5,'#22a884'],[.72,'#1f958b',.6],[1,'#27808e',0]])}
${glow('pit', [[0,'#440154'],[.2,'#46085c'],[.6,'#482576',.85],[1,'#443983',0]])}
${glow('low1', [[0,'#47186a'],[.3,'#472a7a',.85],[.7,'#453681',.45],[1,'#443983',0]])}
${glow('low2', [[0,'#460b5e'],[.4,'#471365',.75],[1,'#472a7a',0]])}
${glow('mid', [[0,'#26828e'],[.3,'#2a788e',.6],[1,'#31688e',0]])}
${glow('teal', [[0,'#1fa088'],[.3,'#24868e',.9],[.6,'#2c728e',.6],[1,'#31688e',0]])}
${[5, 10, 18, 30].map(b => `<filter id="b${b}" x="-60%" y="-60%" width="220%" height="220%"><feGaussianBlur stdDeviation="${b}"/></filter>`).join('')}
<clipPath id="frame"><rect x="363" y="155" width="429" height="424"/></clipPath>
</defs>
<g clip-path="url(#frame)">
<rect x="363" y="155" width="429" height="424" fill="url(#base)"/><rect x="363" y="155" width="429" height="424" fill="url(#low)"/>
${haze(shape.nw, '#433d84', 18)}${haze(shape.nw, '#453781', 10, .8)}
${haze('M330 465C395 453 428 453 458 468L508 497C534 512 553 540 552 620H330z', '#433e85', 18)}${haze('M330 475C395 463 428 463 458 478L500 503C526 520 543 545 542 620H330z', '#463480', 10, .9)}
${haze('M830 461H762C738 461 719 481 719 506C719 532 738 551 763 551H830z', '#433e85', 18)}${haze('M830 468H762C742 468 726 485 726 506C726 528 742 544 763 544H830z', '#453781', 10, .7)}
${haze('M541 130C534 182 515 200 521 221C521 243 545 256 578 263C612 270 645 265 666 241C694 216 700 188 684 130z', '#2b758e', 30)}
${haze('M545 120C540 182 525 200 525 221C527 243 550 252 580 257C610 262 640 257 658 235C678 212 684 188 674 120z', '#27808e', 18)}
${haze(shape.south, '#2c738e', 30)}${haze(shape.south, '#27808e', 10)}
${spot(486,205,52,58,'mid')}${spot(466,300,26,26,'mid')}
${haze(shape.pit, '#414287', 18)}${haze(shape.pit, '#453781', 5, .9)}
${haze(shape.mid, '#414287', 18)}${haze(shape.mid, '#453781', 5, .8)}
${spot(430,212,48,46,'low1')}
${spot(434,538,85,75,'low2')}${spot(491,543,38,38,'low2')}${spot(757,502,50,50,'low1')}
${spot(590,200,95,85,'mid')}${spot(575,215,74,72,'peak')}
${spot(600,425,62,56,'mid')}${spot(573,415,52,52,'peak2')}
${spot(552,302,42,38,'pit')}${spot(509,336,30,28,'teal')}
</g>
<g fill="none" stroke="#0a0a0a" stroke-width="2.300">
${Object.values(shape).map(d => `<path d="${d}"/>`).join('')}
<ellipse cx="580.500" cy="212" rx="38.500" ry="36.500"/><ellipse cx="576" cy="216" rx="24" ry="23.500"/><circle cx="573.500" cy="217.500" r="13.500"/>
<circle cx="552" cy="303" r="7.500"/><ellipse cx="508" cy="335" rx="17" ry="16"/><circle cx="510" cy="338" r="3" stroke-width="3"/>
<circle cx="576" cy="418.500" r="25.800"/><circle cx="570.500" cy="415.500" r="15.500"/><circle cx="568.500" cy="414" r="9"/>
</g>
${labels.map(([x, y, r, t]) => `<text transform="translate(${x} ${y}) rotate(${r})" y="5">${t}</text>`).join('')}
<path d="M414 199l15 6-4 2.500 5 6-3 2.500-5-6-2.500 4z" fill="#000" stroke="#fff" stroke-width="1.200"/>
<path d="M430 196v3M427 202h2.500l-1.500 6h3" stroke="#fff" stroke-width="4.500" fill="none"/><path d="M430.500 196l-.6 3M427 202h2.500l-1.500 6h3" stroke="#000" stroke-width="2.200" fill="none"/>
</svg>`);

/* ---------- status bar ---------- */
define('status-bar', `${check}
:host{display:flex;align-items:center;height:23px;padding:0 4px 0 3px;background:#f0f0f0;color:#1a1a1a}
label{display:flex;align-items:center;gap:2px;white-space:nowrap}
.box{display:flex;align-items:center;height:18px;background:#fff;border:1px solid #7a7a7a}
.box input,.box select{border:0;outline:0;background:none;padding:0 2px;width:100%;min-width:0;height:16px;appearance:none}
input::placeholder{color:#777;opacity:1}
.msg{flex:1;padding-left:6px}
.spin{display:flex;flex-direction:column;gap:3px;width:11px;height:16px;flex:none;justify-content:center;align-items:center;background:#f0f0f0}
.spin i{border:3px solid transparent;border-top:0;border-bottom:4px solid #111}.spin i+i{border-top:4px solid #111;border-bottom:0}
button{border:0;background:none;padding:0;display:flex;align-items:center;gap:2px;white-space:nowrap}`,
`<div class="box" style="width:173px;padding-left:3px">${ic('mag', 12)}<input type="text" placeholder="Type to locate (Ctrl+K)" aria-label="Locate"></div>
<span class="msg">No features at this position found.</span>
<label>Coordinate<span class="box" style="width:97px"><input type="text" value="790648,9235697" style="text-align:center"></span></label>
<button aria-label="Toggle extents" style="padding:0 7px 0 2px">${ic('bug', 15)}</button>
<label>Scale<span class="box" style="width:82px;padding-right:2px"><select><option>1:35,048</option></select>${ic('cdt', 9)}</span></label>
<button aria-label="Lock scale" style="padding:0 7px 0 2px">${ic('lock', 15)}</button>
<label>Magnifier<span class="box" style="width:65px"><input type="text" value="100%"><span class="spin"><i></i><i></i></span></span></label>
<label style="padding-left:5px;gap:5px">Rotation<span class="box" style="width:64px"><input type="text" value="0.0 °"><span class="spin"><i></i><i></i></span></span></label>
<label style="padding:0 12px 0 4px;gap:5px"><input type="checkbox" checked>Render</label>
<button>${ic('crs', 15)}EPSG:32718</button>
<button aria-label="Messages" style="padding-left:12px">${ic('chat')}</button>`);

/* ---------- task bar ---------- */
define('task-bar', `
:host{display:flex;height:40px;background:#0b0b0b;color:#fff;font:12px/17px "Open Sans",sans-serif}
button{border:0;background:none;padding:0;width:48px;height:40px;display:grid;place-items:center;color:#fff}
.app{width:50px;position:relative}.app::after{content:"";position:absolute;left:5px;right:4px;bottom:0;height:2px;background:#e4f0a2}
.app.on{background:#3a3a3a}.app.on::after{left:0;right:1px}
.apps{display:flex;padding-left:2px}
.kobo{width:24px;height:24px;background:#cf2028;border-radius:2px;font:bold 9px/9px "Liberation Sans",sans-serif;padding-top:5px;text-align:center}
.kobo small{display:block;font-size:4px;line-height:5px}
.tray{margin-left:auto;display:flex;align-items:center}
.tray button{width:var(--w)}
.clock{text-align:center;width:68px;line-height:18px}
.note{position:relative}.note b{position:absolute;left:27px;top:20px;width:15px;height:15px;border-radius:8px;border:1px solid #999;background:#333;font:11px/13px "Open Sans",sans-serif}
.edge{width:4px;border-left:1px solid #666;height:40px}`,
`<button aria-label="Start">${ic('win', 16)}</button><button aria-label="Search">${ic('tsearch')}</button><button aria-label="Task view">${ic('tview')}</button>
<div class="apps"><button class="app" aria-label="File Explorer">${ic('folder', 21)}</button><button class="app on" aria-label="QGIS">${ic('qgis', 23)}</button><button class="app" aria-label="Chrome">${ic('chrome', 22)}</button><button class="app" aria-label="Excel">${ic('excel', 21)}</button><button class="app"><span class="kobo"><small>@Rakuten</small>kobo</span></button><button class="app" aria-label="PowerPoint">${ic('ppt', 21)}</button><button class="app" aria-label="OBS">${ic('obs', 22)}</button></div>
<div class="tray"><button style="--w:44px" aria-label="People">${ic('people')}</button><button style="--w:36px" aria-label="Hidden icons">${ic('tup', 14)}</button><button style="--w:30px" aria-label="Battery">${ic('bat')}</button><button style="--w:34px" aria-label="Wi-Fi">${ic('wifi', 14)}</button><button style="--w:30px" aria-label="Volume">${ic('vol')}</button><button style="--w:40px" aria-label="Pen">${ic('pen', 14)}</button><button style="--w:40px">ESP</button><time class="clock">07:28 p. m.<br>01/07/2018</time><button class="note" style="--w:54px" aria-label="Notifications">${ic('note')}<b>1</b></button><span class="edge"></span></div>`);

/* ---------- shell ---------- */
define('qgis-app', `
:host{display:flex;flex-direction:column;min-height:100vh}
main{flex:1;display:grid;grid-template-columns:294px minmax(0,1fr) 369px;column-gap:4px;padding-top:1px}
.right{display:flex;flex-direction:column;gap:5px}
main>map-canvas{margin-top:-1px}
main>dock-panel{padding-bottom:1px}
.grow{flex:1}`,
`<title-bar></title-bar><menu-bar></menu-bar><tool-bars></tool-bars>
<main><dock-panel heading="Layers"><layer-tree class="fill"></layer-tree></dock-panel>
<map-canvas></map-canvas>
<div class="right"><dock-panel heading="Processing Toolbox"><tool-box></tool-box></dock-panel>
<dock-panel class="grow" heading="Results Viewer"><results-view class="fill"></results-view></dock-panel>
<dock-panel heading="Identify Results"><identify-view></identify-view></dock-panel></div></main>
<status-bar></status-bar><task-bar></task-bar>`);
</script>
</body>
</html>
